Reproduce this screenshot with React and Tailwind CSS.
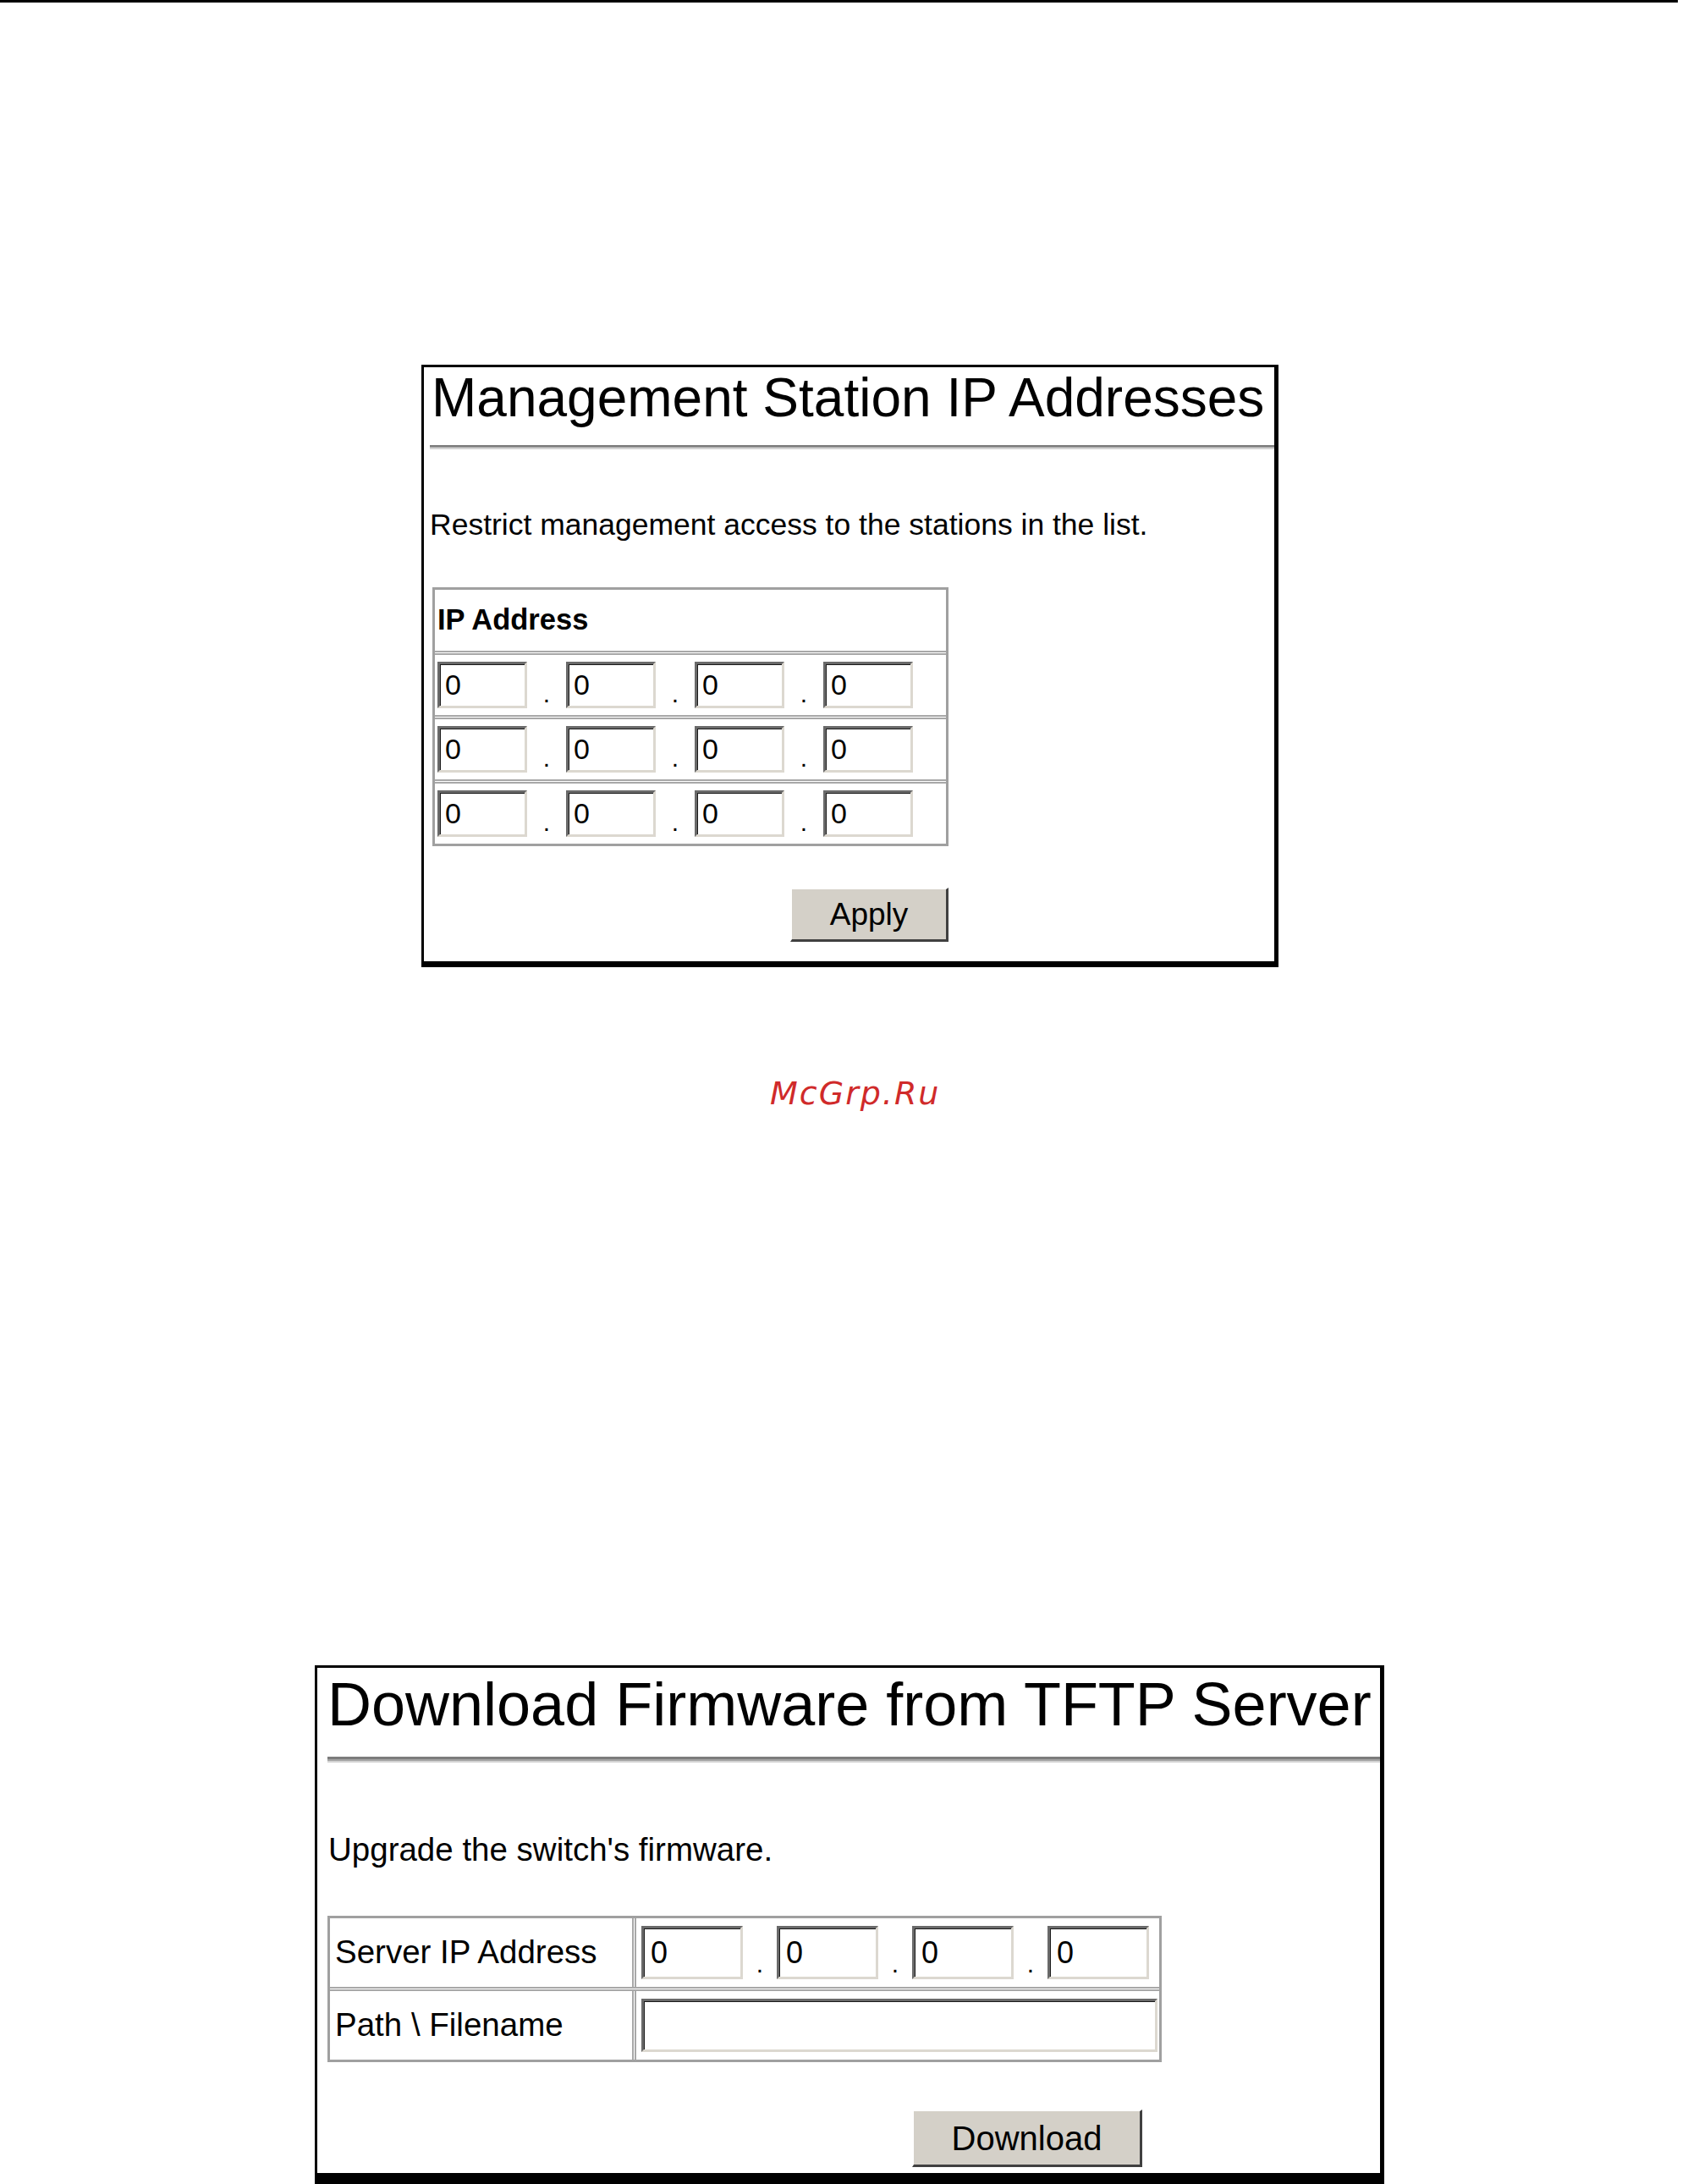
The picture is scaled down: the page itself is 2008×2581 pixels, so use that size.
import { Fragment } from 'react'

const sans = "font-['Liberation_Sans',Arial,sans-serif]"

function IpInput({ big }) {
    return (
        <input
            defaultValue="0"
            className={
                big
                    ? 'w-[120px] h-[63px] border-[3px] border-t-[#6a6a6a] border-l-[#6a6a6a] border-r-[#dcd8d0] border-b-[#dcd8d0] shadow-[inset_1px_1px_0_#1a1a1a] pl-[8px] text-[36px] leading-none text-black outline-none bg-white'
                    : 'w-[106px] h-[55px] border-[3px] border-t-[#6a6a6a] border-l-[#6a6a6a] border-r-[#dcd8d0] border-b-[#dcd8d0] shadow-[inset_1px_1px_0_#1a1a1a] pl-[6px] text-[34px] leading-none text-black outline-none bg-white'
            }
        />
    )
}

function IpRow({ big }) {
    return (
        <div className="flex items-center h-full">
            {[0, 1, 2, 3].map((i) => (
                <Fragment key={i}>
                    {i > 0 && (
                        <span
                            className={
                                big
                                    ? 'w-[40px] self-end mb-[12px] text-center text-[30px] leading-none'
                                    : 'w-[46px] self-end mb-[10px] text-center text-[30px] leading-none'
                            }
                        >
                            .
                        </span>
                    )}
                    <IpInput big={big} />
                </Fragment>
            ))}
        </div>
    )
}

function Rule({ thick }) {
    return thick ? (
        <div className="ml-[12px] mt-[26px] h-[7px] border-t-[3px] border-b-[2px] border-t-[#7c7c7c] border-b-[#d4d4d4] bg-[#a4a4a4]" />
    ) : (
        <div className="ml-[7px] mt-[24px] h-[5px] border-t-2 border-b-2 border-t-[#7c7c7c] border-b-[#d4d4d4] bg-[#a4a4a4]" />
    )
}

function Separator() {
    return <div className="h-[5px] border-y-2 border-[#a8a8a8]" />
}

function WinButton({ children, className }) {
    return (
        <button
            className={`bg-[#d4d0c8] border-t-2 border-l-2 border-t-white border-l-white border-r-[3px] border-b-[3px] border-r-[#404040] border-b-[#404040] text-black leading-none ${className}`}
        >
            {children}
        </button>
    )
}

export default function App() {
    return (
        <div className={`w-[2008px] min-h-[2581px] bg-white text-black overflow-hidden ${sans}`}>
            {/* Top page rule */}
            <div className="h-[3px] w-[1983px] bg-black" />

            {/* Management Station IP Addresses */}
            <section className="ml-[498px] mt-[428px] w-[1013px] border-l-[3px] border-t-[3px] border-r-[5px] border-b-[7px] border-black pb-[23px]">
                <h1 className="pl-[9px] pt-[4px] text-[64px] leading-none font-normal whitespace-nowrap">
                    Management Station IP Addresses
                </h1>
                <Rule />
                <p className="pl-[7px] mt-[72px] text-[35.5px] leading-none whitespace-nowrap">
                    Restrict management access to the stations in the list.
                </p>

                <div className="ml-[10px] mt-[55px] w-[610px] h-[306px] border-[3px] border-[#a0a0a0] flex flex-col">
                    <div className="h-[72px] flex items-center pl-[3px]">
                        <span className="text-[34.5px] leading-none font-bold">IP Address</span>
                    </div>
                    {[0, 1, 2].map((r) => (
                        <Fragment key={r}>
                            <Separator />
                            <div className="h-[71px] pl-[3px]">
                                <IpRow />
                            </div>
                        </Fragment>
                    ))}
                </div>

                <div className="ml-[10px] mt-[49px] w-[610px] flex justify-end">
                    <WinButton className="w-[187px] h-[64px] text-[37px]">Apply</WinButton>
                </div>
            </section>

            {/* Watermark */}
            <div className="mt-[130px] pl-[910px]">
                <span className="font-['DejaVu_Sans',sans-serif] italic text-[38px] leading-none tracking-[2px] text-[#d02a2a]">
                    McGrp.Ru
                </span>
            </div>

            {/* Download Firmware from TFTP Server */}
            <section className="ml-[372px] mt-[656px] w-[1264px] border-l-[3px] border-t-[3px] border-r-[5px] border-b-[14px] border-black pb-[7px]">
                <h1 className="pl-[12px] pt-[7px] text-[72px] leading-none font-normal whitespace-nowrap">
                    Download Firmware from TFTP Server
                </h1>
                <Rule thick />
                <p className="pl-[13px] mt-[84px] text-[38.5px] leading-none whitespace-nowrap">
                    Upgrade the switch's firmware.
                </p>

                <div className="ml-[12px] mt-[59px] w-[986px] h-[173px] border-[3px] border-[#a0a0a0] flex flex-col">
                    <div className="h-[81px] flex">
                        <div className="w-[357px] flex items-center pl-[6px] text-[38.5px] leading-none whitespace-nowrap">
                            Server IP Address
                        </div>
                        <div className="w-[5px] border-x-2 border-[#a8a8a8]" />
                        <div className="flex-1 pl-[6px]">
                            <IpRow big />
                        </div>
                    </div>
                    <Separator />
                    <div className="h-[81px] flex">
                        <div className="w-[357px] flex items-center pl-[6px] text-[38.5px] leading-none whitespace-nowrap">
                            Path \ Filename
                        </div>
                        <div className="w-[5px] border-x-2 border-[#a8a8a8]" />
                        <div className="flex-1 flex items-center pl-[6px]">
                            <input className="w-[610px] h-[63px] border-[3px] border-t-[#6a6a6a] border-l-[#6a6a6a] border-r-[#dcd8d0] border-b-[#dcd8d0] shadow-[inset_1px_1px_0_#1a1a1a] pl-[8px] text-[36px] outline-none bg-white" />
                        </div>
                    </div>
                </div>

                <div className="ml-[703px] mt-[56px]">
                    <WinButton className="w-[272px] h-[68px] text-[40px]">Download</WinButton>
                </div>
            </section>
        </div>
    )
}
